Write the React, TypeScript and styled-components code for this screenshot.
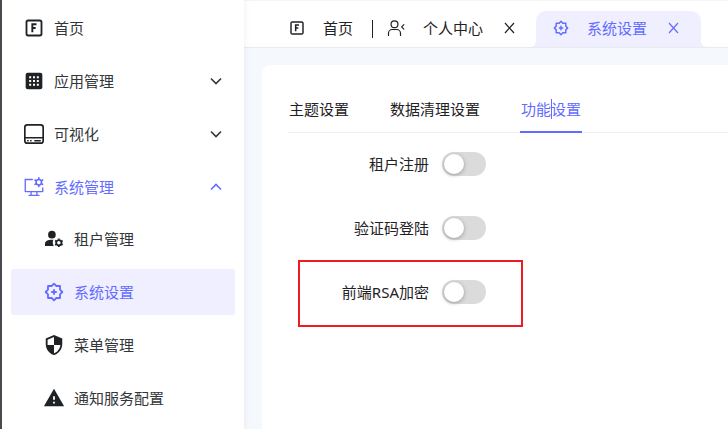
import React, { useState } from 'react';
import styled, { createGlobalStyle } from 'styled-components';
import { MdSecurity, MdWarning } from 'react-icons/md';

const ink = '#1f2225';
const accent = '#646cff';
const accentSoft = '#efefff';

const GlobalStyle = createGlobalStyle`
  * { box-sizing: border-box; }
  body {
    margin: 0;
    background: #f5f9fd;
    color: ${ink};
    font: 15px/20px "Noto Sans", "Noto Sans CJK SC", sans-serif;
  }
  button { font: inherit; color: inherit; background: none; border: 0; padding: 0; cursor: pointer; }
`;

const Shell = styled.div`
  display: flex;
  min-height: 100vh;
`;

const Sidebar = styled.nav`
  flex: 0 0 244px;
  padding: 5px 9px;
  background: #fff;
  border-left: 2px solid #4a494f;
  box-shadow: 1px 0 6px rgba(0, 21, 41, 0.06);
  z-index: 1;
`;

const MenuList = styled.ul`
  display: flex;
  flex-direction: column;
  gap: 7px;
  list-style: none;
  margin: 0;
  padding: 0;
`;

const SubMenu = styled(MenuList)`
  margin-top: 6px;
`;

const MenuButton = styled.button<{ $nested?: boolean; $selected?: boolean; $accent?: boolean }>`
  display: flex;
  align-items: center;
  gap: 10px;
  width: 100%;
  height: 46px;
  padding: 0 13px 0 ${p => (p.$nested ? 33 : 13)}px;
  border-radius: 3px;
  background: ${p => (p.$selected ? accentSoft : 'transparent')};
  color: ${p => (p.$selected || p.$accent ? accent : '#333639')};
  text-align: left;
`;

const MenuIcon = styled.span<{ $accent?: boolean }>`
  display: flex;
  align-items: center;
  justify-content: center;
  flex: none;
  width: 20px;
  height: 20px;
  color: ${p => (p.$accent ? accent : ink)};
  svg { flex: none; }
`;

const MenuText = styled.span`
  flex: 1;
`;

const Main = styled.div`
  flex: 1;
  min-width: 0;
  display: flex;
  flex-direction: column;
`;

const TabBar = styled.header`
  display: flex;
  align-items: flex-end;
  height: 48px;
  padding-left: 45px;
  background: #fff;
  border-top: 1px solid #f5f5f6;
  border-bottom: 1px solid #e9ecef;
`;

const PageTab = styled.div<{ $active?: boolean }>`
  position: relative;
  display: flex;
  align-items: center;
  gap: 21px;
  height: 36px;
  padding: ${p => (p.$active ? '0 22px 2px 17px' : '0 0 2px')};
  margin-left: ${p => (p.$active ? 21 : 0)}px;
  border-radius: 10px 10px 0 0;
  background: ${p => (p.$active ? accentSoft : 'transparent')};
  color: ${p => (p.$active ? accent : ink)};

  &::before, &::after {
    content: '';
    display: ${p => (p.$active ? 'block' : 'none')};
    position: absolute;
    bottom: 0;
    width: 6px;
    height: 6px;
  }
  &::before { left: -6px; background: radial-gradient(circle at 0 0, transparent 6px, ${accentSoft} 6px); }
  &::after { right: -6px; background: radial-gradient(circle at 100% 0, transparent 6px, ${accentSoft} 6px); }
`;

const PageTabLink = styled.button`
  display: flex;
  align-items: center;
  gap: 18px;
`;

const CloseButton = styled.button`
  display: flex;
`;

const Divider = styled.span`
  width: 1px;
  height: 18px;
  margin: 0 14px 9px 19px;
  background: ${ink};
`;

const Card = styled.main`
  flex: 1;
  margin: 17px 0 0 18px;
  padding: 24px 0 24px 26px;
  background: #fff;
  border-radius: 9px 0 0 0;
`;

const SettingTabs = styled.div`
  display: flex;
  gap: 39px;
  border-bottom: 1px solid #efeff5;
`;

const SettingTab = styled.button<{ $active: boolean }>`
  position: relative;
  height: 44px;
  margin-bottom: -1px;
  padding: 0 1px 2px;
  border-bottom: 2px solid ${p => (p.$active ? accent : 'transparent')};
  color: ${p => (p.$active ? accent : ink)};
`;

const Caret = styled.span`
  position: absolute;
  top: 10px;
  left: 50%;
  width: 1px;
  height: 20px;
  background: ${accent};
`;

const Form = styled.form`
  display: flex;
  flex-direction: column;
  gap: 40px;
  padding-top: 19px;
`;

const Field = styled.div`
  position: relative;
  display: flex;
  align-items: center;
  gap: 13px;
  height: 24px;
`;

const FieldLabel = styled.label`
  width: 141px;
  text-align: right;
`;

const Switch = styled.input`
  appearance: none;
  width: 44px;
  height: 24px;
  margin: 0;
  padding: 2px;
  border-radius: 12px;
  background: #dbdbdb;
  cursor: pointer;

  &::before {
    content: '';
    display: block;
    width: 20px;
    height: 20px;
    border-radius: 50%;
    background: #fff;
    box-shadow: 0 1px 4px rgba(0, 0, 0, 0.3);
  }
  &:checked { background: ${accent}; }
  &:checked::before { margin-left: 20px; }
`;

const Highlight = styled.span`
  position: absolute;
  top: -20px;
  left: 10px;
  width: 225px;
  height: 67px;
  border: 2px solid #ed1c24;
  pointer-events: none;
`;

const Svg = ({ size = 20, children }: { size?: number; children: React.ReactNode }) => (
  <svg width={size} height={size} viewBox="0 0 24 24" fill="none" stroke="currentColor" strokeWidth="2"
    strokeLinecap="round" strokeLinejoin="round" aria-hidden="true">{children}</svg>
);

const HomeIcon = ({ size }: { size?: number }) => (
  <Svg size={size}>
    <rect x="3" y="3" width="18" height="18" rx="2" strokeWidth="2.2" />
    <path d="M10 17V7.5h5M10 12h4" strokeWidth="2.3" strokeLinecap="butt" strokeLinejoin="miter" />
  </Svg>
);

const GridIcon = () => (
  <Svg>
    <rect x="2" y="2" width="20" height="20" rx="2.5" fill="currentColor" stroke="none" />
    <path d="M6.2 7.5h2.4M10.8 7.5h2.4M15.4 7.5h2.4M6.2 12h2.4M10.8 12h2.4M15.4 12h2.4M6.2 16.5h2.4M10.8 16.5h2.4M15.4 16.5h2.4"
      stroke="#fff" strokeWidth="2.4" strokeLinecap="butt" />
  </Svg>
);

const DriveIcon = () => (
  <Svg>
    <rect x="1" y="1" width="22" height="22" rx="3" />
    <path d="M1.5 16.5h21" />
    <path d="M4.5 20h.5M8 20h.5M13 20h6.5" strokeWidth="1.8" />
  </Svg>
);

const MonitorIcon = () => (
  <Svg>
    <path d="M10 3H1.5v14.5h21V13M8.5 17.5v4M15.5 17.5v4M6 22h12" strokeWidth="1.6" />
    <circle cx="17.8" cy="6.2" r="3.3" strokeWidth="1.9" />
    <path d="M17.8 1v1.6M17.8 9.8v1.7M13.2 3.6l1.5.9M20.9 7.9l1.5.9M13.2 8.8l1.5-.9M20.9 4.5l1.5-.9" strokeWidth="1.9" />
  </Svg>
);

const TenantIcon = () => (
  <Svg>
    <circle cx="9.5" cy="6.8" r="4.6" fill="currentColor" stroke="none" />
    <path d="M1.2 20.5v-2.8c0-3.2 3.6-4.7 8.3-4.7h1.7c-1 2.300-.9 5.200.6 7.500z" fill="currentColor" stroke="none" />
    <circle cx="17.8" cy="16.500" r="3.200" strokeWidth="2.200" />
    <path d="M17.800 11.300v1.400M17.800 20.300v1.400M13.300 13.900l1.200.7M21.100 18.400l1.200.7M13.300 19.100l1.200-.7M21.100 14.600l1.200-.7" strokeWidth="2.200" strokeLinecap="butt" />
  </Svg>
);

const BadgeIcon = ({ size }: { size?: number }) => (
  <Svg size={size}>
    <path d="M12 2l2.8 2.8h4.4v4.4L22 12l-2.8 2.8v4.4h-4.4L12 22l-2.8-2.8H4.8v-4.4L2 12l2.8-2.8V4.8h4.4z" strokeWidth="2.2" />
    <path d="M12 9.5v5M9.5 12h5" strokeWidth="2.2" />
  </Svg>
);

const PersonIcon = () => (
  <Svg size={18}>
    <circle cx="10" cy="7" r="4.6" strokeWidth="1.6" />
    <path d="M2 22v-3a5 5 0 0 1 5-5h6a5 5 0 0 1 5 5v3M22.5 7.5l-3 3 3 3" strokeWidth="1.6" />
  </Svg>
);

const CloseIcon = () => (
  <svg width="11" height="12" viewBox="0 0 11 12" stroke="currentColor" strokeWidth="1.2" fill="none" aria-hidden="true">
    <path d="M1 1l9 10M10 1L1 11" />
  </svg>
);

const Chevron = ({ up }: { up?: boolean }) => (
  <svg width="12" height="8" viewBox="0 0 12 8" stroke="currentColor" strokeWidth="1.6" fill="none" aria-hidden="true">
    <path d={up ? 'M1 6.5l5-5 5 5' : 'M1 1.5l5 5 5-5'} />
  </svg>
);

const nested = [
  { text: '租户管理', icon: <TenantIcon /> },
  { text: '系统设置', icon: <BadgeIcon /> },
  { text: '菜单管理', icon: <MdSecurity size={22} /> },
  { text: '通知服务配置', icon: <MdWarning size={22} /> },
];

const settingTabs = ['主题设置', '数据清理设置', '功能设置'];

const fields = [
  { id: 'tenant-register', text: '租户注册' },
  { id: 'captcha-login', text: '验证码登陆' },
  { id: 'rsa-encrypt', text: '前端RSA加密', highlighted: true },
];

export default function App() {
  const [page, setPage] = useState('系统设置');
  const [tab, setTab] = useState('功能设置');
  return (
    <>
      <GlobalStyle />
      <Shell>
        <Sidebar>
          <MenuList>
            <li><MenuButton><MenuIcon><HomeIcon /></MenuIcon><MenuText>首页</MenuText></MenuButton></li>
            <li><MenuButton aria-expanded={false}><MenuIcon><GridIcon /></MenuIcon><MenuText>应用管理</MenuText><Chevron /></MenuButton></li>
            <li><MenuButton aria-expanded={false}><MenuIcon><DriveIcon /></MenuIcon><MenuText>可视化</MenuText><Chevron /></MenuButton></li>
            <li>
              <MenuButton $accent aria-expanded><MenuIcon $accent><MonitorIcon /></MenuIcon><MenuText>系统管理</MenuText><Chevron up /></MenuButton>
              <SubMenu>
                {nested.map(item => (
                  <li key={item.text}>
                    <MenuButton $nested $selected={page === item.text} onClick={() => setPage(item.text)}>
                      <MenuIcon $accent={page === item.text}>{item.icon}</MenuIcon>
                      <MenuText>{item.text}</MenuText>
                    </MenuButton>
                  </li>
                ))}
              </SubMenu>
            </li>
          </MenuList>
        </Sidebar>
        <Main>
          <TabBar>
            <PageTab><PageTabLink><HomeIcon size={16} />首页</PageTabLink></PageTab>
            <Divider />
            <PageTab>
              <PageTabLink><PersonIcon />个人中心</PageTabLink>
              <CloseButton aria-label="关闭个人中心"><CloseIcon /></CloseButton>
            </PageTab>
            <PageTab $active>
              <PageTabLink><BadgeIcon size={16} />系统设置</PageTabLink>
              <CloseButton aria-label="关闭系统设置"><CloseIcon /></CloseButton>
            </PageTab>
          </TabBar>
          <Card>
            <SettingTabs role="tablist">
              {settingTabs.map(name => (
                <SettingTab key={name} role="tab" aria-selected={tab === name} $active={tab === name} onClick={() => setTab(name)}>
                  {name}
                  {tab === name && <Caret />}
                </SettingTab>
              ))}
            </SettingTabs>
            <Form>
              {fields.map(field => (
                <Field key={field.id}>
                  <FieldLabel htmlFor={field.id}>{field.text}</FieldLabel>
                  <Switch id={field.id} type="checkbox" role="switch" />
                  {field.highlighted && <Highlight />}
                </Field>
              ))}
            </Form>
          </Card>
        </Main>
      </Shell>
    </>
  );
}
